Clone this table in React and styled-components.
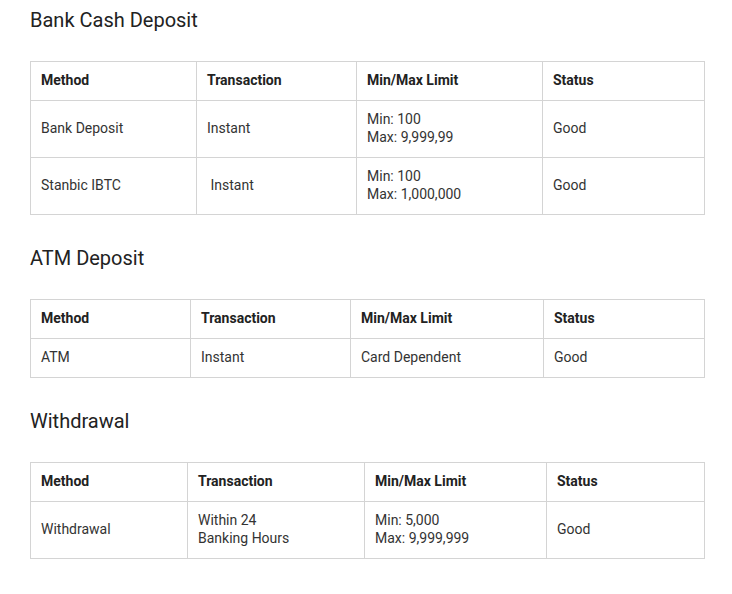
import React from "react";
import styled, { createGlobalStyle } from "styled-components";

const Global = createGlobalStyle`
  html, body { margin: 0; padding: 0; background: #fff; }
  body { font-family: Roboto, "Liberation Sans", sans-serif; }
`;

const Page = styled.div`
  padding: 7px 28px 20px 30px;
  width: 674px;
`;

const Section = styled.section`
  & + & { margin-top: 30px; }
`;

const Heading = styled.h2`
  margin: 0 0 28px;
  font-size: 20px;
  line-height: 26px;
  font-weight: 400;
  color: #222;
`;

const Table = styled.table`
  width: 674px;
  border-collapse: collapse;
  table-layout: fixed;
  font-size: 14px;
  line-height: 18px;
  color: #333;
`;

const Th = styled.th`
  border: 1px solid #d4d4d4;
  padding: 9px 10px 11px;
  text-align: left;
  font-weight: 700;
  color: #222;
`;

const Td = styled.td`
  border: 1px solid #d4d4d4;
  padding: 9px 10px 11px;
  text-align: left;
  vertical-align: middle;
`;

const sections = [
  {
    title: "Bank Cash Deposit",
    widths: [166, 160, 186, 162],
    rows: [
      ["Bank Deposit", "Instant", ["Min: 100", "Max: 9,999,99"], "Good"],
      ["Stanbic IBTC", "\u00a0Instant", ["Min: 100", "Max: 1,000,000"], "Good"],
    ],
  },
  {
    title: "ATM Deposit",
    widths: [160, 160, 193, 161],
    rows: [["ATM", "Instant", "Card Dependent", "Good"]],
  },
  {
    title: "Withdrawal",
    widths: [157, 177, 182, 158],
    rows: [["Withdrawal", ["Within 24", "Banking Hours"], ["Min: 5,000", "Max: 9,999,999"], "Good"]],
  },
];

const headers = ["Method", "Transaction", "Min/Max Limit", "Status"];

const renderCell = (v) =>
  Array.isArray(v)
    ? v.map((line, i) => (
        <React.Fragment key={i}>
          {i > 0 && <br />}
          {line}
        </React.Fragment>
      ))
    : v;

export default function App() {
  return (
    <>
      <Global />
      <Page>
        {sections.map((s) => (
          <Section key={s.title}>
            <Heading>{s.title}</Heading>
            <Table>
              <colgroup>
                {s.widths.map((w, i) => (
                  <col key={i} style={{ width: w }} />
                ))}
              </colgroup>
              <thead>
                <tr>
                  {headers.map((h) => (
                    <Th key={h}>{h}</Th>
                  ))}
                </tr>
              </thead>
              <tbody>
                {s.rows.map((r, ri) => (
                  <tr key={ri}>
                    {r.map((c, ci) => (
                      <Td key={ci}>{renderCell(c)}</Td>
                    ))}
                  </tr>
                ))}
              </tbody>
            </Table>
          </Section>
        ))}
      </Page>
    </>
  );
}
